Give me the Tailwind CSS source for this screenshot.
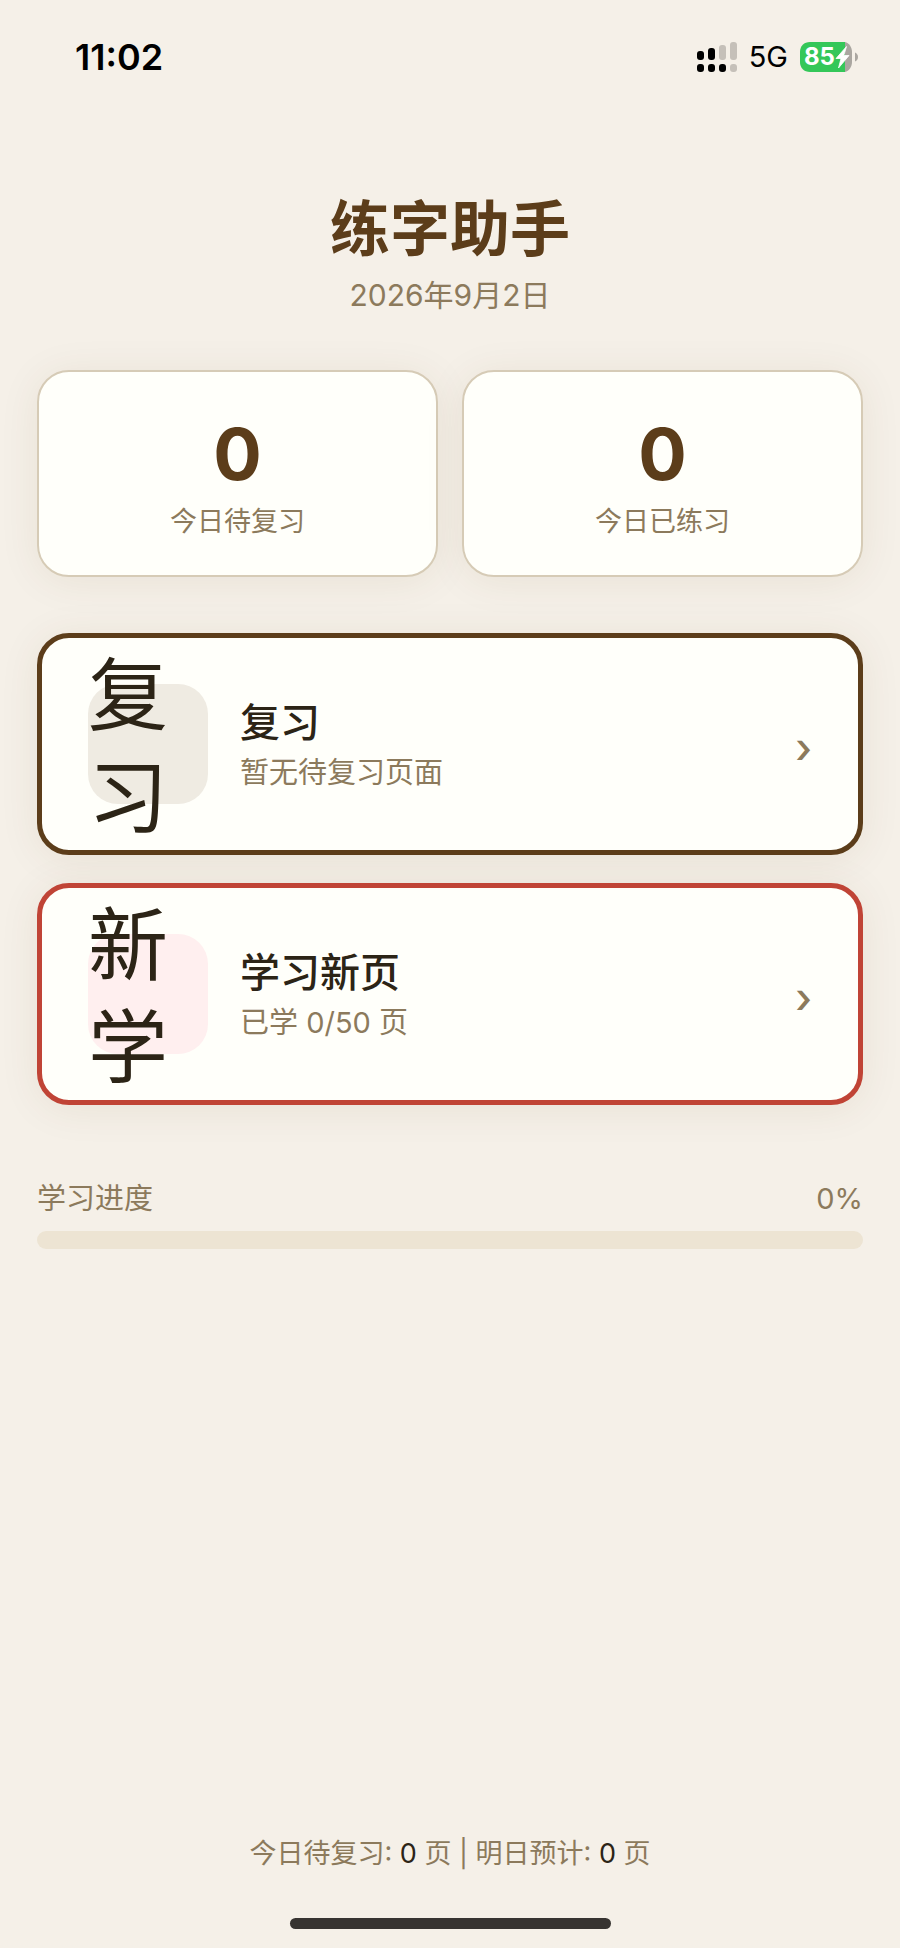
<!DOCTYPE html>
<html lang="zh-CN">
<head>
  <meta charset="UTF-8" />
  <meta name="viewport" content="width=device-width, initial-scale=1.0" />
  <title>练字助手</title>
  <script src="https://cdn.jsdelivr.net/npm/@tailwindcss/browser@4"></script>
</head>
<body class="min-h-screen flex flex-col bg-[#f5f0e8] text-[#2c2416] font-[Inter,'Noto_Sans_CJK_SC',sans-serif]">
  <!-- status bar -->
  <div class="flex items-center justify-between pt-[31px] pl-[75px] pr-[42px] text-black">
    <span class="text-4xl leading-[52px] font-semibold">11:02</span>
    <div class="flex items-center gap-3">
      <svg class="w-10 h-[30px]" viewBox="0 0 40 30" aria-hidden="true">
        <g fill="#000">
          <rect x="0" y="9" width="7" height="9" rx="3" />
          <rect x="11" y="6" width="7" height="12" rx="3" />
          <rect x="0" y="22" width="7" height="8" rx="3" />
          <rect x="11" y="22" width="7" height="8" rx="3" />
          <rect x="22" y="22" width="7" height="8" rx="3" />
        </g>
        <g fill="#c5c0b9">
          <rect x="22" y="3" width="7" height="15" rx="3" />
          <rect x="33" y="0" width="7" height="18" rx="3" />
          <rect x="33" y="22" width="7" height="8" rx="3" />
        </g>
      </svg>
      <span class="text-[29px] leading-[52px]">5G</span>
      <div class="relative w-[58px] h-[30px]">
        <svg class="w-full h-full" viewBox="0 0 58 30" aria-hidden="true">
          <path d="M10 0H45V30H10C4 30 0 26 0 20V10C0 4 4 0 10 0Z" fill="#34c759" />
          <path d="M45 0C49 1 52 5 52 10V20C52 25 49 29 45 30Z" fill="#aaa6a0" />
          <path d="M55 10.500C57 11.500 58 13 58 15S57 18.500 55 19.500Z" fill="#aaa6a0" />
          <path d="M46.500 4.500L36 16.500H41L38.500 26L49 13.500H43.800Z" fill="#fff" stroke="#fff" stroke-width=".8" stroke-linejoin="round" />
        </svg>
        <span class="absolute left-1 top-0 text-2xl leading-[30px] font-bold text-white">85</span>
      </div>
    </div>
  </div>

  <main class="px-[37px] pt-[106px]">
    <header class="text-center">
      <h1 class="text-6xl leading-[80px] font-bold text-[#5c3d1a]">练字助手</h1>
      <p class="mt-1.5 text-[30px] leading-10 text-[#8c7a5c]">2026年9月2日</p>
    </header>

    <section class="grid grid-cols-2 gap-6 mt-[55px] text-center">
      <div class="pt-[46px] pb-[33px] border-2 border-[#d6cbb6] rounded-[32px] bg-[#fffffa] shadow-[0_4px_40px_rgba(92,61,26,0.08)]">
        <div class="text-7xl leading-[72px] font-bold text-[#5c3d1a]">0</div>
        <div class="mt-3 text-[27px] leading-10 text-[#8c7a5c]">今日待复习</div>
      </div>
      <div class="pt-[46px] pb-[33px] border-2 border-[#d6cbb6] rounded-[32px] bg-[#fffffa] shadow-[0_4px_40px_rgba(92,61,26,0.08)]">
        <div class="text-7xl leading-[72px] font-bold text-[#5c3d1a]">0</div>
        <div class="mt-3 text-[27px] leading-10 text-[#8c7a5c]">今日已练习</div>
      </div>
    </section>

    <section class="flex flex-col gap-7 mt-[56px]">
      <button type="button" class="flex items-center gap-8 p-[46px] border-5 border-[#5c3d1a] rounded-[32px] bg-[#fffffa] text-left shadow-[0_4px_40px_rgba(92,61,26,0.08)]">
        <span class="flex items-center w-[120px] h-[120px] pt-1 rounded-[30px] bg-[#efebe2]">
          <span class="w-20 text-[80px] leading-[102px]">复习</span>
        </span>
        <span class="flex-1 pt-1.5">
          <span class="block text-[40px] leading-[52px] font-medium">复习</span>
          <span class="block text-[29px] leading-[48px] text-[#8c7a5c]">暂无待复习页面</span>
        </span>
        <span class="pt-2 text-[42px] leading-[52px] font-medium text-[#8c7a5c]">›</span>
      </button>
      <button type="button" class="flex items-center gap-8 p-[46px] border-5 border-[#c04436] rounded-[32px] bg-[#fffffa] text-left shadow-[0_4px_40px_rgba(92,61,26,0.08)]">
        <span class="flex items-center w-[120px] h-[120px] pt-1 rounded-[30px] bg-[#ffefef]">
          <span class="w-20 text-[80px] leading-[102px]">新学</span>
        </span>
        <span class="flex-1 pt-1.5">
          <span class="block text-[40px] leading-[52px] font-medium">学习新页</span>
          <span class="block text-[29px] leading-[48px] text-[#8c7a5c]">已学 0/50 页</span>
        </span>
        <span class="pt-2 text-[42px] leading-[52px] font-medium text-[#8c7a5c]">›</span>
      </button>
    </section>

    <section class="mt-[74px]">
      <div class="flex justify-between text-[29px] leading-10 text-[#8c7a5c]">
        <span id="progressLabel">学习进度</span>
        <span>0%</span>
      </div>
      <div role="progressbar" aria-labelledby="progressLabel" aria-valuemin="0" aria-valuemax="100" aria-valuenow="0" class="mt-3 h-[18px] rounded-full bg-[#ede4d3] overflow-hidden">
        <div class="h-full bg-[#5c3d1a]" style="width: 0%"></div>
      </div>
    </section>
  </main>

  <footer class="flex flex-col items-center mt-auto pb-[19px]">
    <p class="text-[27px] leading-10 text-[#8c7a5c]">今日待复习: <span class="text-[#2c2416]">0</span> 页 | 明日预计: <span class="text-[#2c2416]">0</span> 页</p>
    <div class="mt-11 w-[321px] h-[11px] rounded-full bg-[#373431]"></div>
  </footer>
</body>
</html>
